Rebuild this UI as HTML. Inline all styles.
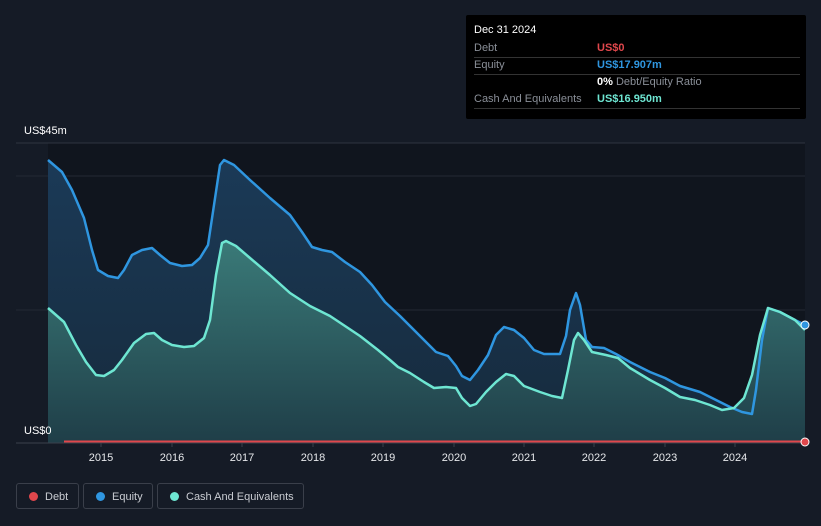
<!DOCTYPE html>
<html><head><meta charset="utf-8"><style>
body{margin:0;width:821px;height:526px;background:#151b26;font-family:"Liberation Sans",sans-serif;overflow:hidden;position:relative}
.t{position:absolute;font-size:11px;color:#fff}
.tip{position:absolute;left:466px;top:15px;width:340px;height:104px;background:#000;border-radius:2px}
.row{position:absolute;left:8px;width:326px;border-bottom:1px solid #333;font-size:11px;color:#8a8f98;height:17px;line-height:17px}
.leg{position:absolute;top:483px;height:26px;border:1px solid #3a3f4a;border-radius:3px;color:#c9ccd2;font-size:11px;line-height:26px;box-sizing:border-box;white-space:nowrap}
.leg i{position:absolute;top:8px;left:12px;width:9px;height:9px;border-radius:50%}
.leg span{position:absolute;left:28px;top:0}
</style></head><body>
<svg width="821" height="526" style="position:absolute;left:0;top:0">
<defs>
<linearGradient id="ge" x1="0" y1="0" x2="0" y2="1"><stop offset="0" stop-color="#1b3a57"/><stop offset="1" stop-color="#162a3c"/></linearGradient>
<linearGradient id="gc" x1="0" y1="0" x2="0" y2="1"><stop offset="0" stop-color="#3a7a78"/><stop offset="1" stop-color="#1f3e48"/></linearGradient>
</defs>
<rect x="48" y="143" width="757" height="300" fill="#10151e"/>
<line x1="16" y1="143" x2="805" y2="143" stroke="#2e3440"/>
<line x1="16" y1="176" x2="805" y2="176" stroke="#232934"/>
<line x1="16" y1="310" x2="805" y2="310" stroke="#232934"/>
<path d="M48,160 L62,172 72,190 84,218 92,250 98,270 108,276 118,278 124,270 132,255 142,250 152,248 160,255 170,263 182,266 192,265 200,258 208,245 214,205 220,165 224,160 234,165 250,180 270,198 290,215 302,232 312,247 322,250 332,252 345,262 360,272 372,285 385,302 400,316 420,336 436,352 448,356 456,366 462,376 470,380 478,370 488,355 496,335 504,327 514,330 524,338 534,350 544,354 560,354 566,336 570,310 576,293 580,305 586,340 592,347 604,348 616,354 630,362 650,372 665,378 680,386 700,392 716,400 730,407 742,412 752,414 756,390 762,340 768,308 780,312 795,320 805,325 L805,443 48,443Z" fill="url(#ge)"/>
<path d="M48,308 L64,322 76,345 86,362 96,375 104,376 114,370 122,360 134,343 146,334 154,333 162,340 172,345 184,347 194,346 204,338 210,320 216,275 222,243 226,241 236,246 250,258 270,275 290,293 310,306 330,316 345,326 360,336 378,350 390,360 398,367 410,373 424,382 434,388 446,387 456,388 462,398 470,406 476,404 486,392 496,382 506,374 514,376 524,386 540,392 552,396 562,398 568,370 574,340 578,333 584,340 592,352 606,355 618,358 630,368 650,380 665,388 680,397 695,400 710,405 722,410 734,408 744,398 752,375 760,335 768,308 780,312 795,320 805,330 L805,443 48,443Z" fill="url(#gc)"/>
<polyline fill="none" stroke="#2f96e0" stroke-width="2.5" stroke-linejoin="round" points="48,160 62,172 72,190 84,218 92,250 98,270 108,276 118,278 124,270 132,255 142,250 152,248 160,255 170,263 182,266 192,265 200,258 208,245 214,205 220,165 224,160 234,165 250,180 270,198 290,215 302,232 312,247 322,250 332,252 345,262 360,272 372,285 385,302 400,316 420,336 436,352 448,356 456,366 462,376 470,380 478,370 488,355 496,335 504,327 514,330 524,338 534,350 544,354 560,354 566,336 570,310 576,293 580,305 586,340 592,347 604,348 616,354 630,362 650,372 665,378 680,386 700,392 716,400 730,407 742,412 752,414 756,390 762,340 768,308 780,312 795,320 805,325"/>
<polyline fill="none" stroke="#6ee6d2" stroke-width="2.5" stroke-linejoin="round" points="48,308 64,322 76,345 86,362 96,375 104,376 114,370 122,360 134,343 146,334 154,333 162,340 172,345 184,347 194,346 204,338 210,320 216,275 222,243 226,241 236,246 250,258 270,275 290,293 310,306 330,316 345,326 360,336 378,350 390,360 398,367 410,373 424,382 434,388 446,387 456,388 462,398 470,406 476,404 486,392 496,382 506,374 514,376 524,386 540,392 552,396 562,398 568,370 574,340 578,333 584,340 592,352 606,355 618,358 630,368 650,380 665,388 680,397 695,400 710,405 722,410 734,408 744,398 752,375 760,335 768,308 780,312 795,320 805,330"/>
<line x1="16" y1="443" x2="805" y2="443" stroke="#3a404c"/>
<line x1="64" y1="441.5" x2="805" y2="441.5" stroke="#e0474c" stroke-width="2"/>
<circle cx="805" cy="442" r="4" fill="#e0474c" stroke="#fff" stroke-width="1"/>
<circle cx="805" cy="325" r="4" fill="#2f96e0" stroke="#fff" stroke-width="1"/>
<g stroke="#3a404c"><line x1="101" y1="443" x2="101" y2="447"/><line x1="172" y1="443" x2="172" y2="447"/><line x1="242" y1="443" x2="242" y2="447"/><line x1="313" y1="443" x2="313" y2="447"/><line x1="383" y1="443" x2="383" y2="447"/><line x1="454" y1="443" x2="454" y2="447"/><line x1="524" y1="443" x2="524" y2="447"/><line x1="594" y1="443" x2="594" y2="447"/><line x1="665" y1="443" x2="665" y2="447"/><line x1="735" y1="443" x2="735" y2="447"/></g>
<g fill="#e6e8eb" font-size="11" text-anchor="middle" font-family="Liberation Sans"><text x="101" y="461">2015</text><text x="172" y="461">2016</text><text x="242" y="461">2017</text><text x="313" y="461">2018</text><text x="383" y="461">2019</text><text x="454" y="461">2020</text><text x="524" y="461">2021</text><text x="594" y="461">2022</text><text x="665" y="461">2023</text><text x="735" y="461">2024</text></g>
</svg>
<div class="t" style="left:24px;top:125px">US$45m</div>
<div class="t" style="left:24px;top:425px">US$0</div>
<div class="tip">
<div style="position:absolute;left:8px;top:9px;color:#fff;font-size:11px">Dec 31 2024</div>
<div class="row" style="top:25px">Debt<span style="position:absolute;left:123px;color:#e0474c;font-weight:bold">US$0</span></div>
<div class="row" style="top:42px">Equity<span style="position:absolute;left:123px;color:#2f96e0;font-weight:bold">US$17.907m</span></div>
<div class="row" style="top:59px;border:none"><span style="position:absolute;left:123px"><b style="color:#fff">0%</b> Debt/Equity Ratio</span></div>
<div class="row" style="top:76px">Cash And Equivalents<span style="position:absolute;left:123px;color:#6ee6d2;font-weight:bold">US$16.950m</span></div>
</div>
<div class="leg" style="left:16px;width:63px"><i style="background:#e0474c"></i><span>Debt</span></div>
<div class="leg" style="left:83px;width:70px"><i style="background:#2f96e0"></i><span>Equity</span></div>
<div class="leg" style="left:157px;width:147px"><i style="background:#6ee6d2"></i><span>Cash And Equivalents</span></div>
</body></html>
